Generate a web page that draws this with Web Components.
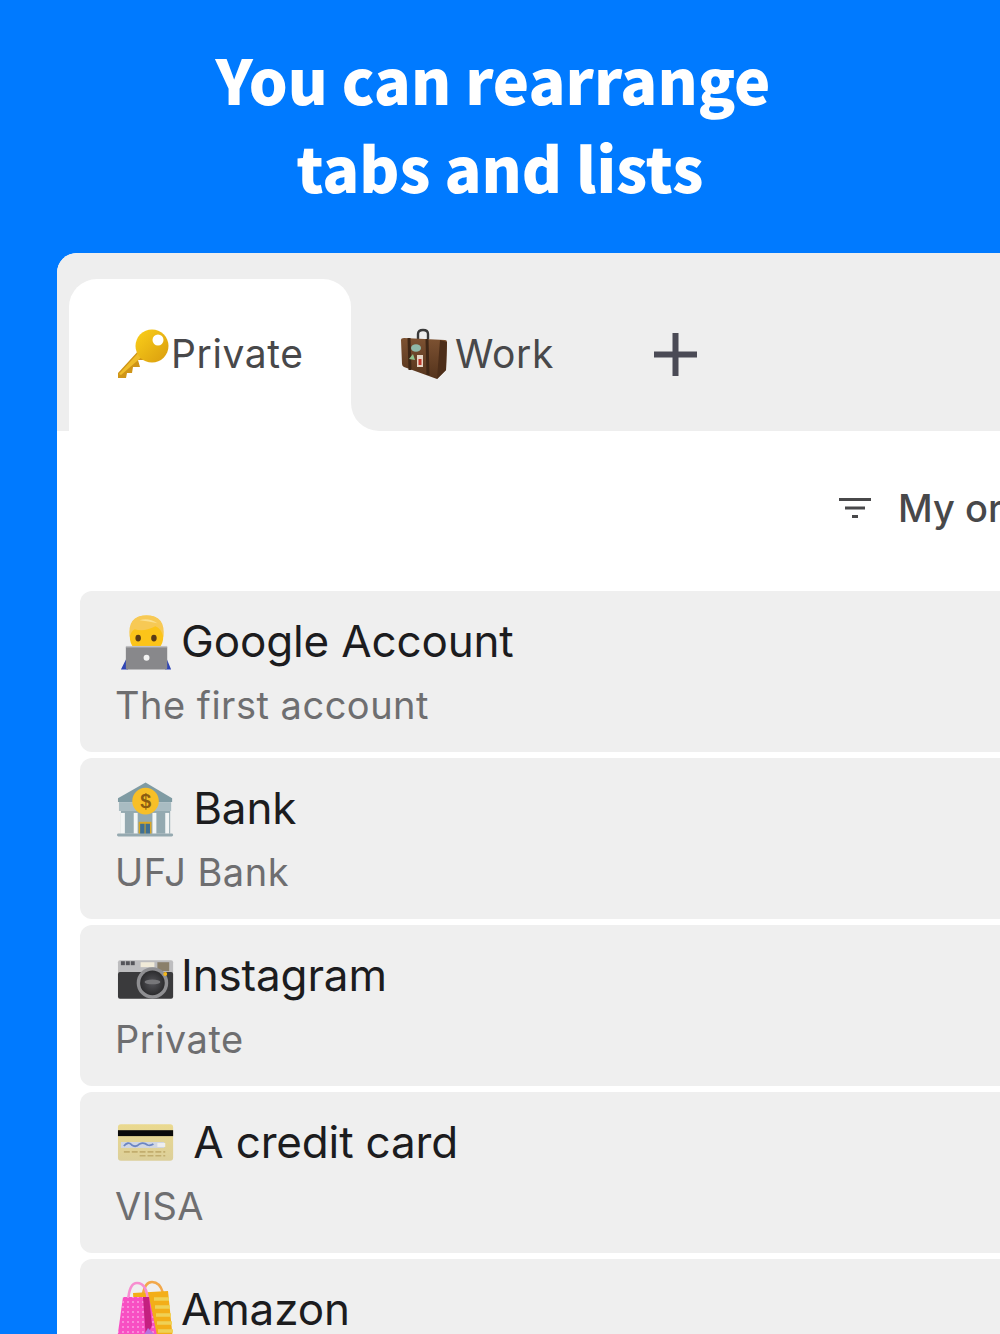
<!DOCTYPE html>
<html>
<head>
<meta charset="utf-8">
<title>Tabs and lists</title>
<style>
  html, body { margin: 0; height: 1334px; overflow: hidden; background: #007aff; }
  body { font-family: "Inter", "Liberation Sans", sans-serif; }
</style>
</head>
<body>
<app-hero>You can rearrange <br>tabs and lists</app-hero>
<app-panel>
  <app-tabs slot="tabs">
    <app-tab slot="active" active emoji="key">Private</app-tab>
    <app-tab emoji="case">Work</app-tab>
  </app-tabs>
  <app-sort>My order</app-sort>
  <app-row emoji="person" sub="The first account">Google Account</app-row>
  <app-row emoji="bank" sub="UFJ Bank"> Bank</app-row>
  <app-row emoji="camera" sub="Private">Instagram</app-row>
  <app-row emoji="card" sub="VISA"> A credit card</app-row>
  <app-row emoji="bags" sub="">Amazon</app-row>
</app-panel>

<script>
const icons = {
  key: `<svg width="52" height="52" viewBox="0 0 52 52">
    <defs><linearGradient id="k" x1="0" y1="0" x2="1" y2="1"><stop offset="0" stop-color="#fbd01a"/><stop offset="1" stop-color="#d99c0e"/></linearGradient></defs>
    <path d="M23 21 L1 45 V50 H9 L10 45 H15 L16 39 H23 L21 32 H30 Z" fill="#cf9518"/>
    <path d="M23 23 L2 46 L4 47 L27 27 Z" fill="#efbd2a"/>
    <circle cx="35" cy="18" r="16.5" fill="url(#k)"/>
    <circle cx="41" cy="12" r="5.5" fill="#fff"/>
  </svg>`,
  case: `<svg width="50" height="52" viewBox="0 0 50 52">
    <defs><linearGradient id="b" x1="0" y1="0" x2="0" y2="1"><stop offset="0" stop-color="#7d5232"/><stop offset="1" stop-color="#54331c"/></linearGradient></defs>
    <path d="M19 11 V6 Q19 2 24 2 Q29 2 29 6 V11" fill="none" stroke="#3a3a3a" stroke-width="2.4"/>
    <path d="M2 12 Q2 10 5 10 L46 12 Q48 12 48 14 L47 42 L38 51 L5 39 Q3 38 3 36 Z" fill="url(#b)"/>
    <path d="M38 51 L47 42 L48 14 L41 12 Z" fill="#4d2e19"/>
    <path d="M10 10 L11 42 M28 11 L29 47" stroke="#3f2716" stroke-width="3" fill="none"/>
    <ellipse cx="17" cy="20" rx="5" ry="3.8" fill="#8fb9a9"/>
    <path d="M10 31 L14 26 L16 32 Z" fill="#8fc28c"/>
    <rect x="18" y="27" width="6" height="12" fill="#e6d6c6"/><rect x="19.5" y="31" width="3" height="6" fill="#c0392b"/>
  </svg>`,
  person: `<svg width="66" height="60" viewBox="0 0 66 60">
    <path d="M5 58 L11 46 H16 L12 58 Z M50 58 L47 46 H51 L56 58 Z" fill="#2f45b5"/>
    <path d="M14 24 Q13 3 31 3 Q49 3 48 24 Q48 40 31 40 Q14 40 14 24 Z" fill="#fcc419"/>
    <path d="M14 25 Q11 3 31 3 Q51 3 48 25 Q46 16 40 14 Q28 20 19 17 Q15 19 14 25 Z" fill="#f7c955"/>
    <path d="M24 8 Q33 5 42 11 Q33 9 24 8 Z" fill="#fbe08f"/>
    <ellipse cx="22.5" cy="26" rx="2.8" ry="3.4" fill="#5a3b16"/><ellipse cx="38.5" cy="26" rx="2.8" ry="3.4" fill="#5a3b16"/>
    <rect x="10" y="34" width="42" height="24" rx="1.5" fill="#88888b"/>
    <rect x="10" y="34" width="42" height="1.5" fill="#c0c0c3"/>
    <circle cx="31" cy="46" r="3" fill="#f3f3f3"/>
  </svg>`,
  bank: `<svg width="66" height="60" viewBox="0 0 66 60">
    <path d="M30 3 L57 19 V23 H2 V19 Z" fill="#7f9ba3"/>
    <rect x="3" y="23" width="53" height="9" fill="#a9bcc2"/>
    <rect x="5" y="32" width="50" height="23" fill="#93a9b0"/>
    <rect x="5" y="34" width="4" height="22" fill="#f2f5f5"/><rect x="18" y="34" width="4" height="22" fill="#f2f5f5"/>
    <rect x="37" y="34" width="4" height="22" fill="#f2f5f5"/><rect x="50" y="34" width="4" height="22" fill="#f2f5f5"/>
    <rect x="23" y="43" width="13" height="14" fill="#d9a726"/>
    <rect x="24.5" y="45" width="4.5" height="12" fill="#3f6f93"/><rect x="30" y="45" width="4.5" height="12" fill="#3f6f93"/>
    <rect x="1" y="55" width="57" height="3" rx="1.5" fill="#95a9b0"/>
    <circle cx="30" cy="22" r="13.5" fill="#f7bf27"/>
    <text x="30" y="29" text-anchor="middle" font-family="Liberation Sans, sans-serif" font-size="20" font-weight="700" fill="#8a5c12">$</text>
  </svg>`,
  camera: `<svg width="66" height="60" viewBox="0 0 66 60">
    <defs><radialGradient id="l"><stop offset="0" stop-color="#55555a"/><stop offset="1" stop-color="#2c2c2e"/></radialGradient></defs>
    <rect x="2" y="14" width="56" height="14" rx="2" fill="#bdbdbf"/>
    <rect x="5" y="15" width="4" height="4" fill="#55555a"/><rect x="10" y="15" width="4" height="4" fill="#55555a"/><rect x="15" y="15" width="4" height="4" fill="#55555a"/>
    <rect x="25" y="16" width="14" height="5" fill="#f0ead8"/>
    <rect x="42" y="16" width="12" height="9" fill="#8a7f6a"/>
    <rect x="2" y="26" width="56" height="27" rx="2" fill="#3a3a3c"/>
    <circle cx="37" cy="37" r="16" fill="#8f8f92"/>
    <circle cx="37" cy="37" r="12.5" fill="url(#l)"/>
    <ellipse cx="37" cy="36" rx="8" ry="2.5" fill="#77777a"/>
    <circle cx="50" cy="28" r="2" fill="#f5b81c"/>
  </svg>`,
  card: `<svg width="66" height="60" viewBox="0 0 66 60">
    <defs><linearGradient id="c" x1="0" y1="0" x2="0" y2="1"><stop offset="0" stop-color="#ead98f"/><stop offset="1" stop-color="#dccf9a"/></linearGradient></defs>
    <rect x="2" y="11" width="56" height="37" rx="3" fill="url(#c)"/>
    <rect x="2" y="17" width="56" height="6" fill="#0a0a0a"/>
    <rect x="5" y="29" width="44" height="6" fill="#cfd6e4"/>
    <path d="M8 33 q4 -5 8 -1 q4 3 8 -1 q4 -2 8 1 q3 1 6 -1" stroke="#6d86c2" stroke-width="1.8" fill="none"/>
    <rect x="42" y="30" width="8" height="4" fill="#eeeeee"/>
    <path d="M8 39 H50 M24 43 H50" stroke="#c2ad6e" stroke-width="1.6" stroke-dasharray="6 2"/>
  </svg>`,
  bags: `<svg width="66" height="60" viewBox="0 0 66 60" style="overflow:visible">
    <defs><pattern id="d" width="5" height="5" patternUnits="userSpaceOnUse"><circle cx="2" cy="2" r="1" fill="#fb9ce0"/></pattern></defs>
    <path d="M27 14 Q29 2 36 2 Q44 2 47 13" fill="none" stroke="#f2a84a" stroke-width="2.6"/>
    <path d="M17 13 L52 11 L57 60 H20 Z" fill="#f3ae18"/>
    <path d="M38 19 H53 M39 27 H54 M40 35 H55 M41 43 H56 M42 51 H57" stroke="#efd155" stroke-width="3.6"/>
    <path d="M12 22 Q13 3 21 3 Q31 3 32 22" fill="none" stroke="#f78ed0" stroke-width="2.6"/>
    <path d="M7 17 H33 L42 60 H1 Z" fill="#f84fc3"/>
    <path d="M7 17 H33 L42 60 H1 Z" fill="url(#d)"/>
    <path d="M27 17 H33 L36 45 L30 60 Z" fill="#c4207f"/>
    <path d="M25 60 L32 48 L44 60 Z" fill="#b673e0"/>
  </svg>`
};

function define(name, css, html) {
  customElements.define(name, class extends HTMLElement {
    connectedCallback() {
      if (this.shadowRoot) return;
      this.attachShadow({mode: 'open'});
      this.shadowRoot.innerHTML = `<style>${css}</style>${typeof html === 'function' ? html(this) : html}`;
    }
  });
}

define('app-hero', `
  :host {
    display: block;
    height: 253px;
    box-sizing: border-box;
    padding-top: 35px;
    text-align: center;
    color: #fff;
    white-space: pre;
    font: 900 61.2px/88px "Noto Sans CJK JP", "Noto Sans", sans-serif;
  }`, `<slot></slot>`);

define('app-panel', `
  :host {
    display: block;
    width: 1100px;
    margin-left: 57px;
    background: #fff;
    border-top-left-radius: 20px;
    overflow: hidden;
  }
  .list { display: flex; flex-direction: column; gap: 6px; padding-left: 23px; }`,
  `<slot name="tabs"></slot><div class="list"><slot></slot></div>`);

define('app-tabs', `
  :host {
    display: flex;
    height: 178px;
    box-sizing: border-box;
    padding: 26px 0 0 12px;
    background: #eee;
  }
  .rest { flex: 1; background: #fff; }
  .fill {
    display: flex;
    height: 100%;
    padding-left: 48px;
    background: #eee;
    border-bottom-left-radius: 28px;
  }
  .plus { display: block; margin: 54px 0 0 100px; }`,
  `<slot name="active"></slot>
   <div class="rest"><div class="fill">
     <slot></slot>
     <svg class="plus" width="43" height="43" viewBox="0 0 43 43"><path d="M21.5 0V43M0 21.5H43" stroke="#4a4a55" stroke-width="6"/></svg>
   </div></div>`);

define('app-tab', `
  :host {
    display: flex;
    align-items: center;
    height: 152px;
    box-sizing: border-box;
    gap: 6px;
    color: #48484a;
    font-size: 39px;
    letter-spacing: .6px;
    padding-bottom: 3px;
  }
  :host([active]) {
    width: 282px;
    padding-left: 48px;
    background: #fff;
    border-radius: 28px 28px 0 0;
    gap: 2px;
  }
  .e { display: flex; }`,
  host => `<span class="e">${icons[host.getAttribute('emoji')]}</span><slot></slot>`);

define('app-sort', `
  :host {
    display: flex;
    align-items: center;
    height: 154px;
    margin-left: -23px;
    padding-left: 782px;
    gap: 27px;
    color: #48484a;
    font-size: 38px;
    font-weight: 500;
    white-space: nowrap;
  }
  svg { display: block; margin-top: 4px; }`,
  `<svg width="32" height="24" viewBox="0 0 32 24"><path d="M0 1.5H32M6 10H26M13 18.5H19" stroke="#48484a" stroke-width="3"/></svg><slot></slot>`);

define('app-row', `
  :host {
    display: block;
    height: 161px;
    box-sizing: border-box;
    padding: 20px 0 0 35px;
    background: #efefef;
    border-radius: 12px 0 0 12px;
  }
  .t { display: flex; height: 60px; align-items: center; color: #1c1c1e; font-size: 44px; letter-spacing: -.15px; white-space: pre; }
  .e { display: flex; box-sizing: border-box; width: 66px; padding: 2px 0 0 1px; flex: none; }
  .s { height: 50px; line-height: 50px; margin-top: 9px; color: #6e6e70; font-size: 38px; letter-spacing: .5px; }`,
  host => `<div class="t"><span class="e">${icons[host.getAttribute('emoji')]}</span><slot></slot></div>
    <div class="s">${host.getAttribute('sub') || ''}</div>`);
</script>
</body>
</html>
